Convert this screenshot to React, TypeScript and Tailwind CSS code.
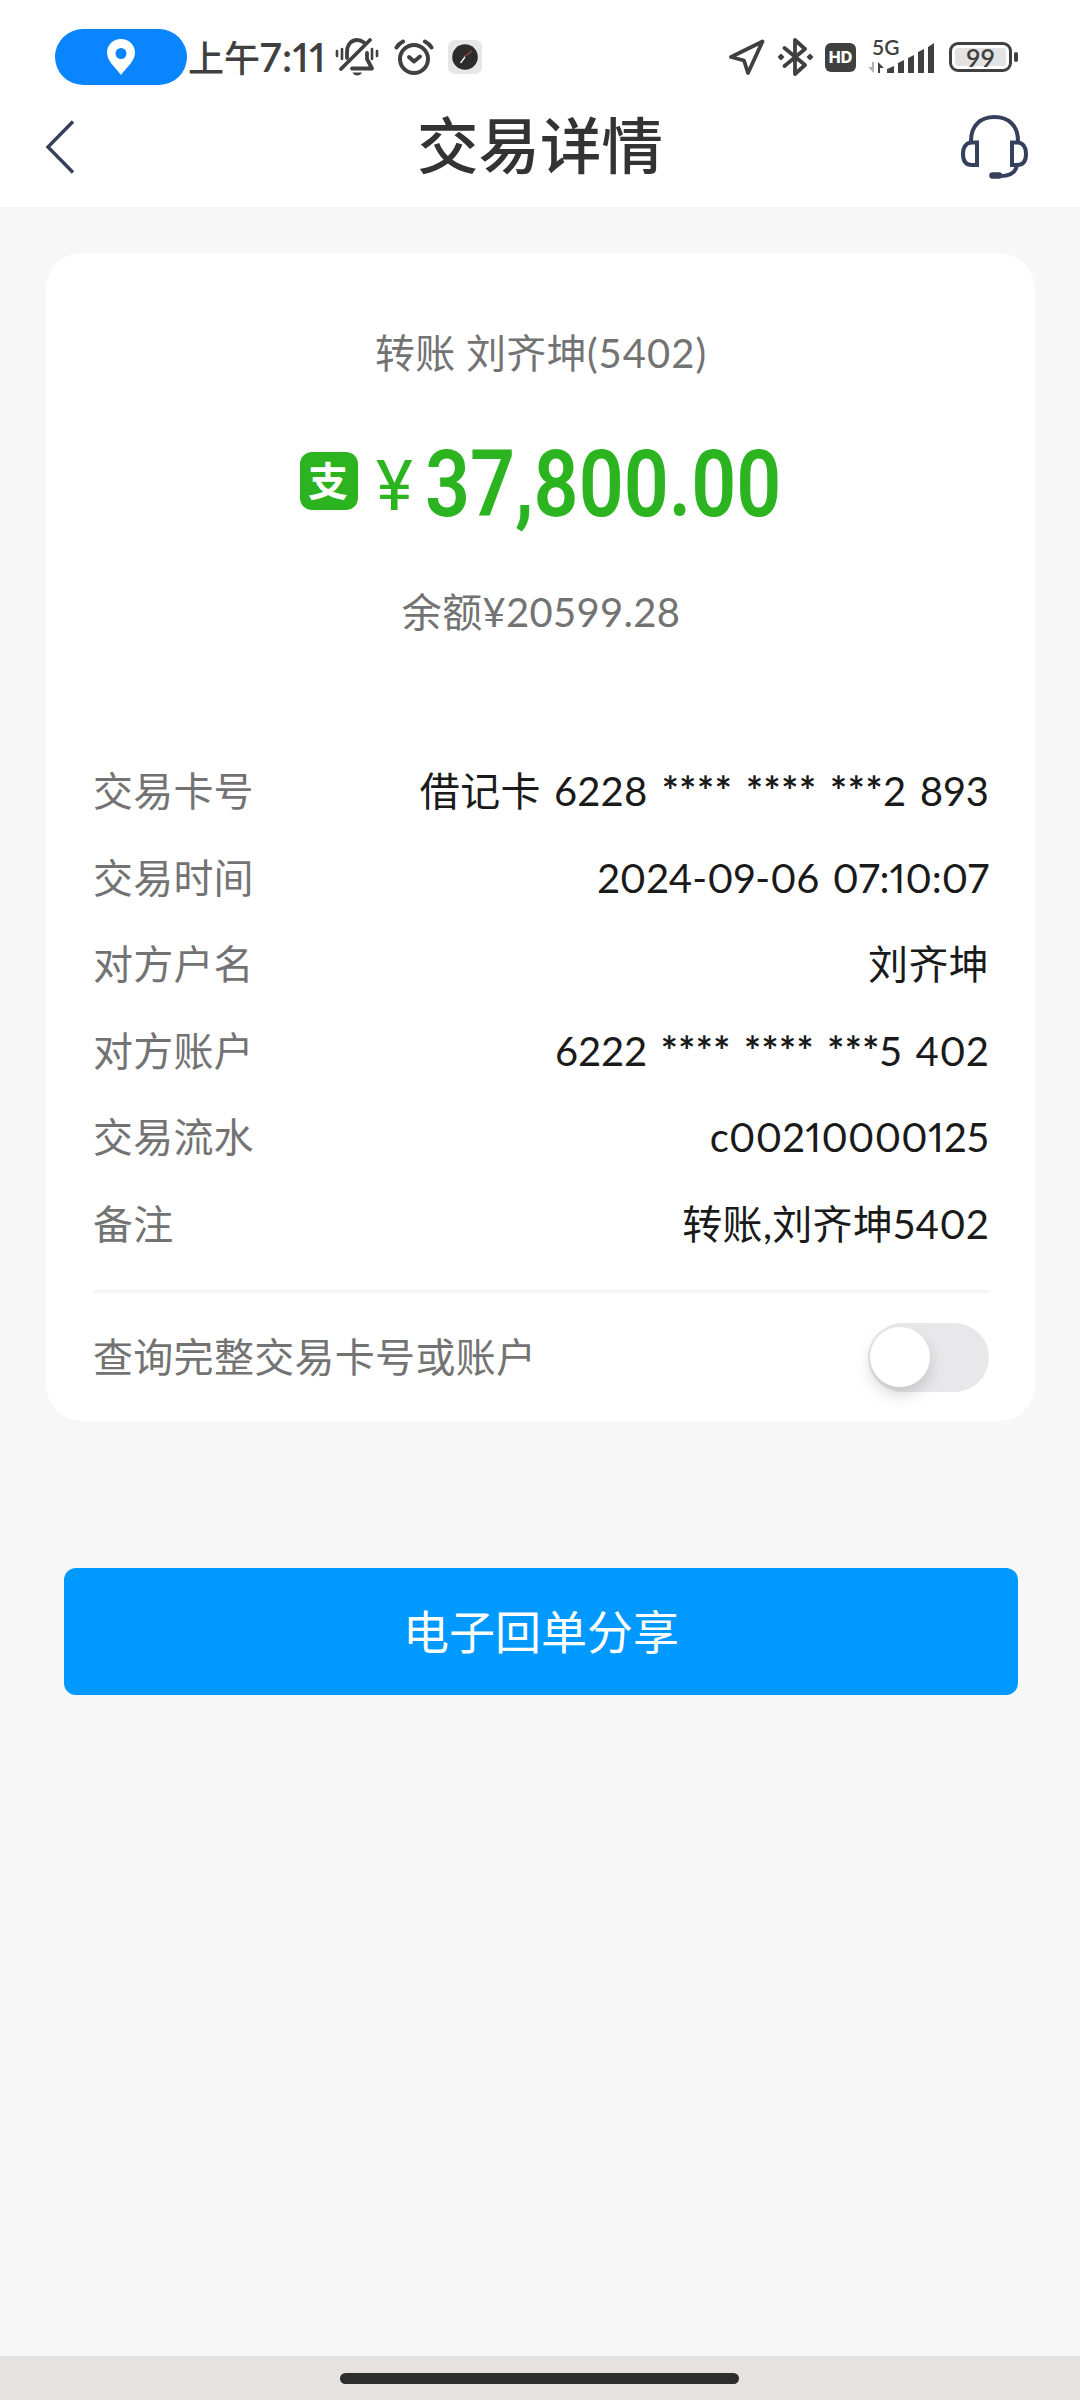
import { useState } from 'react';
import type { ReactNode } from 'react';

interface DetailRow {
    label: string;
    value: ReactNode;
}

const details: DetailRow[] = [
    {
        label: '交易卡号',
        value: (
            <>
                借记卡 <span className="tracking-[0.6px]">6228</span> <span className="font-bold tracking-[0.7px]">**** **** ***</span>2 893
            </>
        ),
    },
    { label: '交易时间', value: <span className="tracking-normal">2024-09-06 07:10:07</span> },
    { label: '对方户名', value: '刘齐坤' },
    {
        label: '对方账户',
        value: (
            <>
                6222 <span className="font-bold tracking-[0.5px]">**** **** ***</span>5 402
            </>
        ),
    },
    { label: '交易流水', value: 'c00210000125' },
    { label: '备注', value: '转账,刘齐坤5402' },
];

function BellOffIcon() {
    return (
        <svg className="ml-3 h-[38px] w-[44px]" viewBox="0 0 44 38" fill="none" stroke="#404040" strokeWidth="3.8" strokeLinecap="round">
            <path d="M12 20V14C12 7 16 2 22 2C25 2 27 3 29 4.500" />
            <path d="M32 15V21L37 30.500H17" strokeLinejoin="round" />
            <path d="M6 31L35 2" />
            <path d="M2 13V18M7 11V21M37 11V21M42 13V18" strokeWidth="2.6" />
            <path d="M17.500 34.500H27C26 36.500 24.500 37.500 22.200 37.500C20 37.500 18.500 36.500 17.500 34.500Z" fill="#404040" stroke="none" />
        </svg>
    );
}

function AlarmIcon() {
    return (
        <svg className="ml-[15px] h-9 w-10" viewBox="0 0 40 36" fill="none" stroke="#404040" strokeWidth="4" strokeLinecap="round" strokeLinejoin="round">
            <circle cx="20" cy="20" r="14" />
            <path d="M2.500 8.500C4 6 6 4 9 2.500M37.500 8.500C36 6 34 4 31 2.500" />
            <path d="M15 18L20 22.500L26 17.500" />
        </svg>
    );
}

function ClockAppIcon() {
    return (
        <svg className="ml-[14px] size-[34px]" viewBox="0 0 34 34">
            <rect width="34" height="34" rx="7" fill="#e6e6e6" />
            <circle cx="17" cy="17" r="12.800" fill="#2c2c2c" />
            <path d="M16 17L24 11" stroke="#a5453f" strokeWidth="1.200" />
            <path d="M12.500 23L17 17" stroke="#fff" strokeWidth="1.300" />
        </svg>
    );
}

function StatusBar() {
    return (
        <div className="flex h-[114px] items-start pl-[55px] pt-[29px]">
            <div className="flex h-14 w-[132px] items-center justify-center rounded-full bg-[#0b84ff]">
                <svg className="h-9 w-[28px]" viewBox="0 0 28 36">
                    <path d="M14 0C6 0 0 6 0 13.500C0 22 8 28 14 36C20 28 28 22 28 13.500C28 6 22 0 14 0ZM14 9A5.500 5.500 0 1 1 14 20A5.500 5.500 0 1 1 14 9Z" fill="#fff" fillRule="evenodd" />
                </svg>
            </div>
            <div className="flex h-14 items-center">
                <span className="w-[136px] whitespace-nowrap pl-px font-['Lato','Noto_Sans_CJK_SC',sans-serif] text-[36px] font-medium leading-[56px] text-[#404040]">
                    上午<span className="text-[40px] font-semibold tracking-[0.5px] proportional-nums">7:11</span>
                </span>
                <BellOffIcon />
                <AlarmIcon />
                <ClockAppIcon />
            </div>
            <div className="ml-auto mr-[62px] flex h-14 items-center">
                <svg className="h-9 w-9" viewBox="0 0 36 36" fill="none" stroke="#404040" strokeWidth="3.800" strokeLinejoin="round">
                    <path d="M33.500 2.500L2 18L15 21.500L19 34Z" />
                </svg>
                <svg className="ml-3 h-[38px] w-[38px]" viewBox="0 0 38 38" fill="none" stroke="#404040" strokeWidth="3.800" strokeLinejoin="round" strokeLinecap="round">
                    <path d="M7.500 10L28 27L18 36V2L28 11L7.500 28" />
                    <path d="M1.500 19L4 16.500L6.500 19L4 21.500ZM30.500 19L33 16.500L35.500 19L33 21.500Z" fill="#404040" strokeWidth="1.500" />
                </svg>
                <div className="ml-[10px] flex h-[29px] w-[31px] items-center justify-center rounded-[6px] bg-[#404040] font-['Inter',sans-serif] text-[16px] font-extrabold text-white">
                    HD
                </div>
                <div className="relative ml-[12px] h-[34px] w-[70px]">
                    <span className="absolute left-[4px] top-[-3px] font-['Lato',sans-serif] text-[21px] font-semibold leading-5 text-[#404040]">5G</span>
                    <svg className="h-[34px] w-[70px]" viewBox="0 0 70 34" fill="#404040">
                        <path d="M6 22V33L0 27H4V22Z" fill="#b0b0b0" />
                        <path d="M10 33V22L16 28H12V33Z" />
                        <path d="M19 33V29L26 26V33ZM30 33V23L36 20V33ZM40 33V18L46 15V33ZM50 33V12L56 9V33ZM60 33V7L66 3V33Z" />
                    </svg>
                </div>
                <div className="ml-[11px] flex items-center">
                    <div className="h-[30px] w-[63px] rounded-[9px] border-[3px] border-[#404040] p-[3px]">
                        <div className="flex h-[18px] items-center justify-center rounded-[3px] bg-[#e3e3e3] font-['Lato',sans-serif] text-[25px] font-semibold leading-[18px] text-[#404040]">
                            99
                        </div>
                    </div>
                    <div className="ml-[2px] h-[10px] w-1 rounded-sm bg-[#404040]" />
                </div>
            </div>
        </div>
    );
}

function Header() {
    return (
        <div className="grid h-[93px] grid-cols-[1fr_auto_1fr] items-start">
            <svg className="ml-[45px] mt-[6px] h-[54px] w-[30px]" viewBox="0 0 30 54" fill="none" stroke="#34405c" strokeWidth="3.400">
                <path d="M28 1.500L3 27L28 52.500" />
            </svg>
            <h1 className="mt-[-1px] font-['Noto_Sans_CJK_SC',sans-serif] text-[61.500px] font-medium leading-[60px] text-[#333]">交易详情</h1>
            <svg className="ml-auto mr-[51px] h-[66px] w-[70px]" viewBox="0 0 70 66" fill="none" stroke="#34405c" strokeWidth="4">
                <path d="M12 27C12 11 22 3 35.500 3C49 3 59 11 59 27" />
                <path d="M18 28.500V51H13C7 51 4 47 4 40C4 33 7 28.500 13 28.500ZM53 28.500V51H58C64 51 67 47 67 40C67 33 64 28.500 58 28.500Z" />
                <path d="M58 51C57 58 51 62 41 62" />
                <path d="M33.500 61.500H40" strokeWidth="6.500" strokeLinecap="round" />
            </svg>
        </div>
    );
}

export default function App() {
    const [showFull, setShowFull] = useState(false);

    return (
        <div className="flex h-[2400px] w-[1080px] flex-col bg-[#f7f7f7] font-['Lato','Noto_Sans_CJK_SC',sans-serif]">
            <div className="bg-white">
                <StatusBar />
                <Header />
            </div>

            <div className="ml-[46px] mr-[45px] mt-[46px] h-[1168px] rounded-[36px] bg-white pl-[47px] pr-[46px]">
                <div className="flex flex-col items-center pt-[70px] text-[#737373]">
                    <p className="text-[40px] leading-[60px] tracking-[0.3px]">
                        转账 刘齐坤<span className="tracking-[1px]">(5402)</span>
                    </p>
                    <div className="mt-[49px] flex h-[100px] items-center text-[#2bb41f]">
                        <div className="mt-[-2px] flex size-[58px] items-center justify-center rounded-[12px] bg-[#2bb41f] font-['Noto_Sans_CJK_SC',sans-serif] text-[40px] font-bold leading-[54px] text-white">
                            <span className="-ml-0.5 -mt-1">支</span>
                        </div>
                        <span className="ml-[18px] mt-[7px] font-['Roboto',sans-serif] text-[70px] leading-[100px]">¥</span>
                        <span className="ml-[12px] mt-[6px] w-[357px] whitespace-nowrap font-['Roboto',sans-serif] text-[92px] font-semibold leading-[100px]">
                            <span className="inline-block origin-left scale-x-[0.857]">37,800.00</span>
                        </span>
                    </div>
                    <p className="mt-[50px] text-[40px] leading-[60px] tracking-[0.3px]">余额¥20599.28</p>
                </div>

                <div className="mt-[106px]">
                    {details.map((row) => (
                        <div key={row.label} className="flex h-[86.5px] items-center justify-between text-[40px]">
                            <span className="tracking-[0.2px] text-[#737373]">{row.label}</span>
                            <span className="whitespace-nowrap tracking-[0.3px] text-[#1a1a1a] proportional-nums [word-spacing:3px]">{row.value}</span>
                        </div>
                    ))}
                </div>

                <div className="mt-[23px] flex h-[131px] items-center justify-between border-t-[3px] border-[#f5f5f5]">
                    <span className="text-[40px] tracking-[0.3px] text-[#737373]">查询完整交易卡号或账户</span>
                    <button
                        onClick={() => setShowFull(!showFull)}
                        className={`flex h-[69px] w-[121px] items-center rounded-full bg-[#e8e8ea] px-[2px] ${showFull ? 'justify-end' : 'justify-start'}`}
                    >
                        <span className="size-[60px] rounded-full bg-white shadow-[0_8px_16px_rgba(0,0,0,0.15)]" />
                    </button>
                </div>
            </div>

            <button className="ml-16 mt-[147px] h-[127px] w-[954px] rounded-[12px] bg-[#09f] text-[46px] text-white">
                电子回单分享
            </button>

            <div className="mt-auto flex h-[44px] justify-center bg-[#e6e2e1] pt-[17px]">
                <div className="mr-[2px] h-[11px] w-[399px] rounded-full bg-[#2d2d2d]" />
            </div>
        </div>
    );
}
